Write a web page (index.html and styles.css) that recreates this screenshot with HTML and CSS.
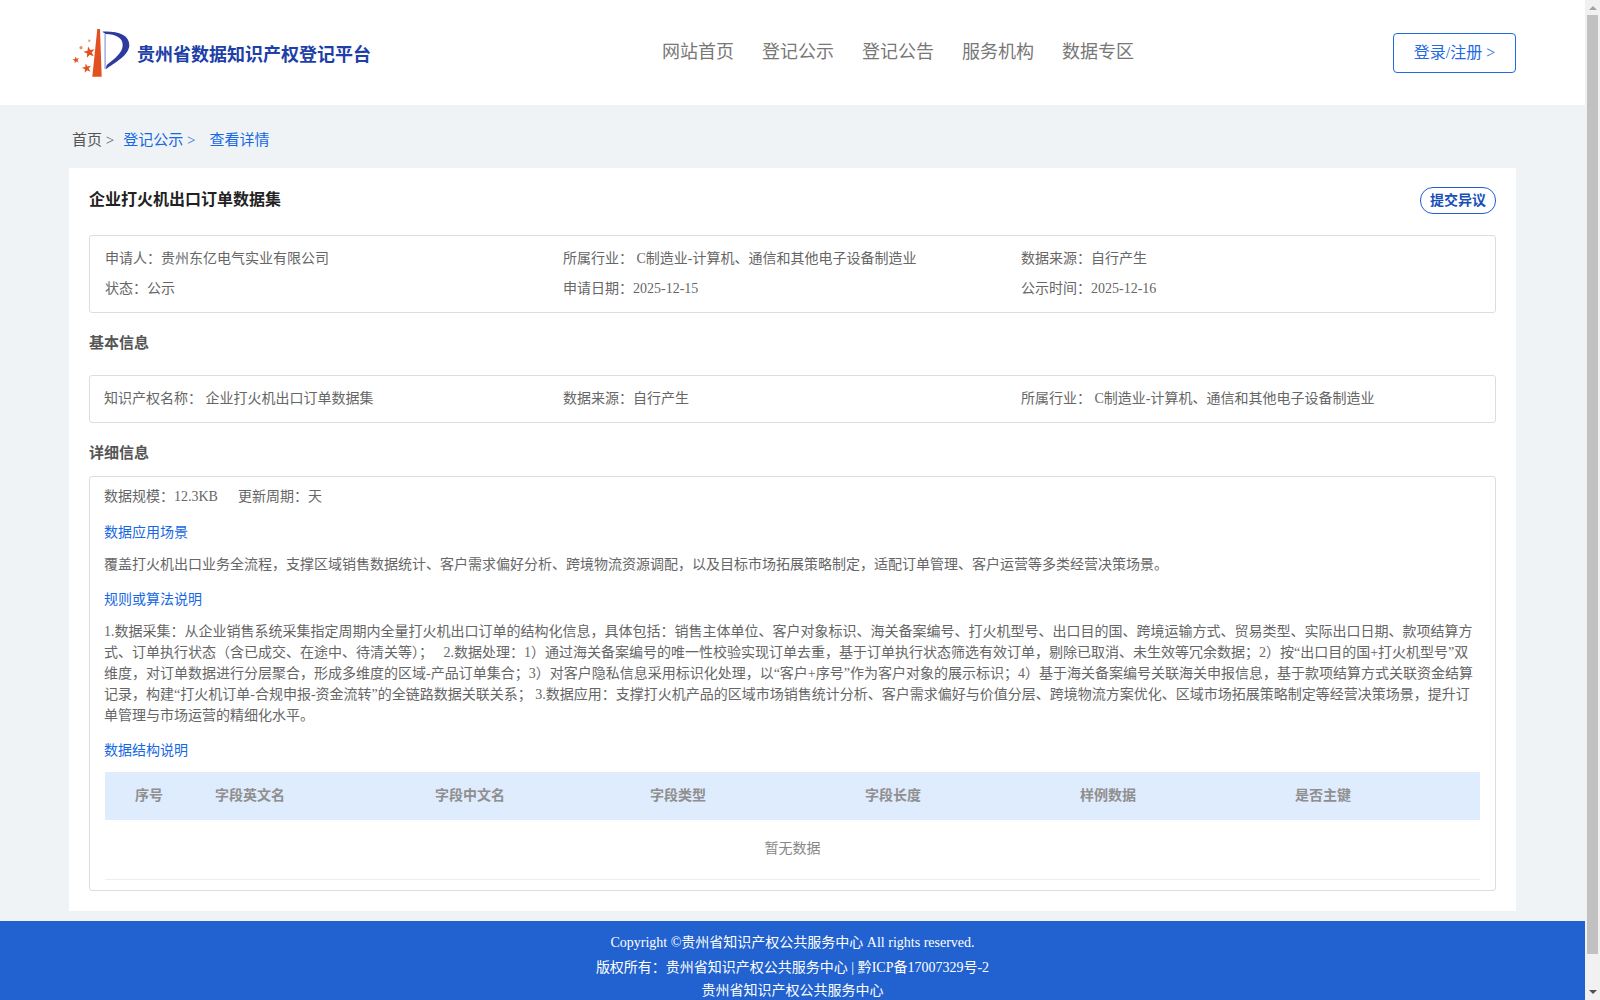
FILE: index.html
```html
<!DOCTYPE html>
<html lang="zh-CN">
<head>
<meta charset="utf-8">
<title>贵州省数据知识产权登记平台</title>
<link rel="stylesheet" href="styles.css">
</head>
<body>
<div class="page">
<header class="topbar">
  <div class="brand">
    <svg class="logo" width="60" height="52" viewBox="0 0 60 52">
      <defs>
        <polygon id="star" points="0,-1 .235,-.324 .951,-.309 .38,.124 .588,.809 0,.4 -.588,.809 -.38,.124 -.951,-.309 -.235,-.324"/>
      </defs>
      <path d="M25.300 1 L28 1 L29.700 48.700 L20.300 48.700 Z" fill="#e2501f"/>
      <path d="M30.300 3.700 C46 3 57.300 7 57.300 17 C57.300 27 44 34 33.700 41.300 L34.700 37 C42 31 50.700 25 50.700 17 C50.700 10 44 6 33.700 6 Z" fill="#2b3a9c"/>
      <path d="M32.500 6 L33.700 6 L33.700 41 L32.500 41 Z" fill="#8f98cf"/>
      <use href="#star" transform="translate(17.300 24.300) rotate(-12) scale(6)" fill="#e2501f"/>
      <use href="#star" transform="translate(4 32) rotate(-12) scale(3.600)" fill="#e2501f"/>
      <use href="#star" transform="translate(14.700 40.300) rotate(-12) scale(5)" fill="#e2501f"/>
      <circle cx="9" cy="19.700" r="1.600" fill="#ef8a6a"/>
      <circle cx="17.300" cy="12.700" r="1.200" fill="#ef9a80"/>
    </svg>
    <span class="brand-name">贵州省数据知识产权登记平台</span>
  </div>
  <nav class="nav">
    <a>网站首页</a><a>登记公示</a><a>登记公告</a><a>服务机构</a><a>数据专区</a>
  </nav>
  <a class="login">登录/注册 &gt;</a>
</header>

<div class="crumbs">
  <span>首页 &gt;</span><span class="link">登记公示 &gt;</span><span class="link last">查看详情</span>
</div>

<main class="card">
  <div class="title-row">
    <h1>企业打火机出口订单数据集</h1>
    <a class="dispute">提交异议</a>
  </div>

  <section class="box grid-box">
    <div>申请人：贵州东亿电气实业有限公司</div>
    <div>所属行业： C制造业-计算机、通信和其他电子设备制造业</div>
    <div>数据来源：自行产生</div>
    <div>状态：公示</div>
    <div>申请日期：2025-12-15</div>
    <div>公示时间：2025-12-16</div>
  </section>

  <h2 class="section-title">基本信息</h2>
  <section class="box basic-box">
    <div>知识产权名称： 企业打火机出口订单数据集</div>
    <div>数据来源：自行产生</div>
    <div>所属行业： C制造业-计算机、通信和其他电子设备制造业</div>
  </section>

  <h2 class="section-title detail-title">详细信息</h2>
  <section class="box detail-box">
    <div class="meta"><span>数据规模：12.3KB</span><span>更新周期：天</span></div>
    <h3 class="sub first">数据应用场景</h3>
    <p>覆盖打火机出口业务全流程，支撑区域销售数据统计、客户需求偏好分析、跨境物流资源调配，以及目标市场拓展策略制定，适配订单管理、客户运营等多类经营决策场景。</p>
    <h3 class="sub">规则或算法说明</h3>
    <p>1.数据采集：从企业销售系统采集指定周期内全量打火机出口订单的结构化信息，具体包括：销售主体单位、客户对象标识、海关备案编号、打火机型号、出口目的国、跨境运输方式、贸易类型、实际出口日期、款项结算方式、订单执行状态（含已成交、在途中、待清关等）；&nbsp;&nbsp; 2.数据处理：1）通过海关备案编号的唯一性校验实现订单去重，基于订单执行状态筛选有效订单，剔除已取消、未生效等冗余数据；2）按“出口目的国+打火机型号”双维度，对订单数据进行分层聚合，形成多维度的区域-产品订单集合；3）对客户隐私信息采用标识化处理，以“客户+序号”作为客户对象的展示标识；4）基于海关备案编号关联海关申报信息，基于款项结算方式关联资金结算记录，构建“打火机订单-合规申报-资金流转”的全链路数据关联关系； 3.数据应用：支撑打火机产品的区域市场销售统计分析、客户需求偏好与价值分层、跨境物流方案优化、区域市场拓展策略制定等经营决策场景，提升订单管理与市场运营的精细化水平。</p>
    <h3 class="sub">数据结构说明</h3>
    <div class="table-head">
      <span>序号</span><span>字段英文名</span><span>字段中文名</span><span>字段类型</span><span>字段长度</span><span>样例数据</span><span>是否主键</span>
    </div>
    <div class="empty">暂无数据</div>
  </section>
</main>

<footer class="footer">
  <div class="foot-a">Copyright ©贵州省知识产权公共服务中心 All rights reserved.</div>
  <div class="foot-b">版权所有：贵州省知识产权公共服务中心 | 黔ICP备17007329号-2</div>
  <div class="foot-c">贵州省知识产权公共服务中心</div>
</footer>
</div>
<div class="scrollbar">
  <span class="arrow up"></span>
  <span class="thumb"></span>
  <span class="arrow down"></span>
</div>
</body>
</html>
```
FILE: styles.css
```css
* { box-sizing: border-box; }
html, body { margin: 0; height: 1000px; overflow: hidden; }
body {
  display: flex;
  background: #eff3f6;
  font-family: "Liberation Serif", "Noto Sans CJK SC", serif;
  font-size: 14px;
  color: #666;
}
.page { width: 1585px; height: 1000px; overflow: hidden; flex: none; }
.topbar {
  height: 105px;
  background: #fff;
  display: flex;
  align-items: center;
  padding: 0 69px 0 72px;
}
.brand { display: flex; align-items: center; width: 500px; }
.logo { flex: none; margin: 2px 5px 0 0; }
.brand-name { font-size: 18px; font-weight: 700; color: #1d3fa8; white-space: nowrap; }
.nav { display: flex; gap: 28px; font-size: 18px; color: #777; margin-left: 90px; margin-top: -5px; }
.login {
  margin-left: auto;
  width: 123px;
  height: 40px;
  border: 1px solid #1f6be0;
  border-radius: 4px;
  color: #1f6be0;
  font-size: 16px;
  display: flex;
  align-items: center;
  justify-content: center;
  padding-bottom: 3px;
}
.crumbs { height: 63px; padding: 3px 0 0 72px; display: flex; align-items: center; font-size: 15px; color: #555; }
.crumbs .link { color: #1668e3; margin-left: 9px; }
.crumbs .last { margin-left: 14px; }
.card {
  background: #fff;
  margin: 0 69px;
  height: 743px;
  padding: 0 20px;
}
.title-row { height: 67px; display: flex; justify-content: space-between; align-items: flex-start; padding-top: 21px; }
h1 { margin: 0; font-size: 16px; line-height: 22px; font-weight: 700; color: #222; }
.dispute {
  width: 76px;
  height: 27px;
  margin-top: -2px;
  border: 1px solid #205fd0;
  border-radius: 13px;
  color: #164fb8;
  font-size: 14px;
  font-weight: 700;
  display: flex;
  align-items: center;
  justify-content: center;
  padding-bottom: 3px;
}
.box { border: 1px solid #ddd; border-radius: 3px; }
.grid-box {
  height: 78px;
  display: grid;
  grid-template-columns: 458px 458px 1fr;
  grid-auto-rows: 30px;
  align-content: center;
  padding: 0 15px 5px;
  align-items: center;
}
.section-title { margin: 0; font-size: 15px; line-height: 20px; font-weight: 700; color: #555; padding: 20px 0 22px; }
.basic-box {
  height: 48px;
  display: grid;
  grid-template-columns: 459px 458px 1fr;
  align-items: center;
  padding: 0 14px 4px;
}
.detail-title { padding: 20px 0 13px; }
.detail-box { height: 415px; padding: 0 15px 10px 14px; }
.meta { display: flex; gap: 20px; height: 36px; align-items: center; }
.sub { margin: 0; font-size: 14px; line-height: 20px; font-weight: 400; color: #1668e3; padding-top: 15px; }
.sub.first { padding-top: 10px; }
p { margin: 0; font-size: 14px; line-height: 21px; padding-top: 11px; }
.table-head {
  margin: 11px 0 0 1px;
  height: 48px;
  background: #dfecfd;
  display: grid;
  grid-template-columns: 110px 220px 215px 215px 215px 215px 1fr;
  align-items: center;
  font-size: 14px;
  font-weight: 700;
  color: #8f8f8f;
  padding-bottom: 4px;
}
.table-head span:first-child { padding-left: 30px; }
.empty { height: 60px; margin-left: 1px; display: flex; align-items: center; justify-content: center; border-bottom: 1px solid #ebeef5; color: #888; padding-bottom: 6px; }
.footer {
  margin-top: 10px;
  background: #2162d0;
  height: 90px;
  color: #fff;
  text-align: center;
  font-size: 14px;
  padding-top: 10px;
}
.foot-a { line-height: 24px; }
.foot-b { line-height: 26px; }
.foot-c { line-height: 20px; }
.scrollbar { width: 15px; height: 1000px; background: #f1f1f1; display: flex; flex-direction: column; align-items: center; flex: none; }
.thumb { width: 11px; height: 939px; background: #c1c1c1; }
.arrow { width: 0; height: 0; border-left: 4px solid transparent; border-right: 4px solid transparent; }
.arrow.up { border-bottom: 4px solid #a3a3a3; margin: 6px 0 5px; }
.arrow.down { border-top: 4px solid #505050; margin-top: auto; margin-bottom: 6px; }
```
